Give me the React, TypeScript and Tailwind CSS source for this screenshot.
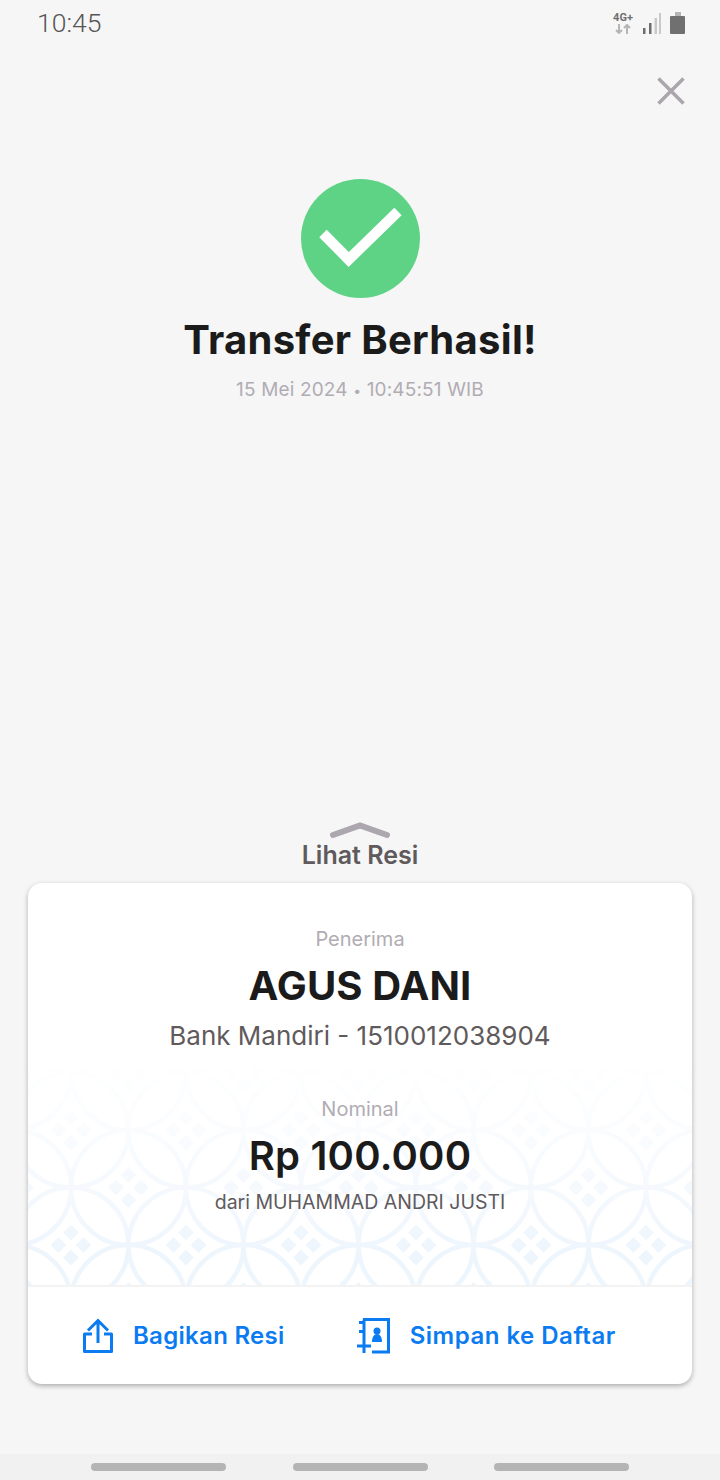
const sans = { fontFamily: 'Inter, "Noto Sans", sans-serif' };

function StatusBar() {
  return (
    <div className="flex h-[46px] items-center justify-between pl-[37px] pr-[35px]">
      <span className="text-[26.5px] font-light leading-none text-[#555555] [font-family:Roboto,sans-serif]">10:45</span>
      <div className="flex items-end gap-[8px]">
        <div className="flex w-[22px] flex-col items-center">
          <span className="text-[11px] font-bold leading-[12px] text-[#707070] [font-family:Roboto,sans-serif]">4G+</span>
          <svg width="16" height="10" viewBox="0 0 16 10" fill="none" strokeWidth="2" stroke="#b5b5b5">
            <path d="M4 0v9M1 6l3 3 3-3" />
            <path d="M12 10V1M9 4l3-3 3 3" />
          </svg>
        </div>
        <svg width="19" height="21" viewBox="0 0 19 21" fill="#c9c9c9">
          <rect x="1" y="15" width="2.500" height="6" fill="#6d6d6d" />
          <rect x="7" y="10" width="2.500" height="11" fill="#6d6d6d" />
          <rect x="12.500" y="5" width="2.500" height="16" />
          <rect x="17" y="0" width="2" height="21" />
        </svg>
        <svg width="15" height="22" viewBox="0 0 15 22" className="ml-[1px]">
          <rect x="5" y="0" width="6" height="4" fill="#b5b5b5" />
          <rect x="0" y="4" width="15" height="18" rx="1" fill="#707070" />
        </svg>
      </div>
    </div>
  );
}

function ShareIcon() {
  return (
    <svg width="30" height="36" viewBox="0 0 30 36" fill="none" stroke="#0a7bf0" strokeWidth="3">
      <path d="M9 16H1.500v17.500h27V16H21" strokeLinejoin="round" />
      <path d="M15 25V3M5 12.500L15 2.500l10 10" />
    </svg>
  );
}

function ContactIcon() {
  return (
    <svg width="33" height="36" viewBox="0 0 33 36" fill="none" stroke="#0a7bf0" strokeWidth="3">
      <path d="M6 1.500H31.500V34H15" />
      <path d="M2 4.500H7V1.500M2 13.500H7V4.500M7 13.500V21" />
      <path d="M0 28H14M7 21V35" />
      <circle cx="20" cy="13" r="3.500" fill="#0a7bf0" stroke="none" />
      <path d="M15 24c0-5 2-8 5-8s5 3 5 8z" fill="#0a7bf0" stroke="none" />
    </svg>
  );
}

const tileCenters = [
  [0, 0],
  [115, 0],
  [0, 115],
  [115, 115],
  [57.5, 57.5],
];

function Kawung() {
  return (
    <svg className="absolute inset-0 h-full w-full" xmlns="http://www.w3.org/2000/svg">
      <defs>
        <pattern id="kawung" x="43" y="75" width="115" height="115" patternUnits="userSpaceOnUse">
          {tileCenters.map(([cx, cy]) => (
            <g key={`${cx}-${cy}`} transform={`translate(${cx} ${cy})`}>
              <circle r="57.5" fill="none" stroke="#edf5fd" strokeWidth="4.500" />
              <g fill="#edf5fd" stroke="#edf5fd" strokeWidth="2" strokeLinejoin="round">
                <path d="M0-19l6.500 6.500L0-6l-6.500-6.500z" />
                <path d="M0 6l6.500 6.500L0 19l-6.500-6.500z" />
                <path d="M-12.500-6.500L-6 0l-6.500 6.500L-19 0z" />
                <path d="M12.500-6.500L19 0l-6.500 6.500L6 0z" />
              </g>
            </g>
          ))}
        </pattern>
      </defs>
      <rect width="100%" height="100%" fill="url(#kawung)" />
    </svg>
  );
}

export default function App() {
  return (
    <div className="flex h-[1480px] w-[720px] flex-col overflow-hidden bg-[#f6f6f6]" style={sans}>
      <StatusBar />

      <div className="flex justify-end pr-[34px] pt-[30px]">
        <svg width="30" height="30" viewBox="0 0 30 30" stroke="#aba6ad" strokeWidth="3.500" fill="none">
          <path d="M2.500 2.500L27.500 27.500M27.500 2.500L2.500 27.500" />
        </svg>
      </div>

      <div className="mt-[73px] flex flex-col items-center">
        <div className="flex h-[119px] w-[119px] items-center justify-center rounded-full bg-[#5fd385]">
          <svg width="84" height="62" viewBox="0 0 84 62" fill="none" stroke="#ffffff" strokeWidth="10.500">
            <path d="M5 25.500L30.700 51.500L80 3.500" />
          </svg>
        </div>
        <h1 className="mt-[17px] text-[40px] font-bold leading-[50px] tracking-[0.3px] text-[#1b1b1b]">Transfer Berhasil!</h1>
        <p className="mt-[12px] h-[26px] text-[19px] leading-[26px] tracking-[0.15px] text-[#b1acb3]">15 Mei 2024 <span className="text-[14px] leading-none">•</span> 10:45:51 WIB</p>
      </div>

      <div className="mt-[419px] flex flex-col items-center">
        <svg width="62" height="18" viewBox="0 0 62 18" fill="none" stroke="#aca6af" strokeWidth="6" strokeLinecap="round">
          <path d="M4 13L31 3.500L58 13" />
        </svg>
        <span className="text-[25px] font-semibold leading-[30px] text-[#5f5a5c]">Lihat Resi</span>
      </div>

      <div className="mx-[28px] mt-[13px] h-[501px] overflow-hidden rounded-[14px] bg-white shadow-[0_2px_5px_rgba(0,0,0,0.3)]">
        <div className="relative h-[402px]">
          <div className="absolute inset-x-0 bottom-0 h-[230px] overflow-hidden">
            <Kawung />
            <div className="absolute inset-0 bg-gradient-to-b from-white via-white/60 via-45% to-transparent to-90%" />
          </div>
          <div className="relative flex flex-col items-center pt-[43px]">
            <p className="text-[20px] leading-[26px] text-[#b1acb3]">Penerima</p>
            <p className="mt-[10px] text-[40px] font-bold leading-[48px] tracking-[0.1px] text-[#1b1b1b]">AGUS DANI</p>
            <p className="mt-[9px] text-[26px] leading-[34px] text-[#5f5a5c]">Bank Mandiri - 1510012038904</p>
            <p className="mt-[43px] text-[20px] leading-[26px] text-[#b1acb3]">Nominal</p>
            <p className="mt-[10px] text-[40px] font-semibold leading-[48px] tracking-[0.2px] text-[#1b1b1b]">Rp 100.000</p>
            <p className="mt-[9px] text-[19.5px] leading-[26px] text-[#5f5a5c]">dari MUHAMMAD ANDRI JUSTI</p>
          </div>
        </div>
        <div className="flex h-[99px] items-center border-t-2 border-[#f3f3f3] pl-[55px]">
          <ShareIcon />
          <span className="ml-[20px] text-[24px] font-semibold tracking-[0.3px] text-[#0a7bf0]">Bagikan Resi</span>
          <div className="ml-[72px]"><ContactIcon /></div>
          <span className="ml-[20px] text-[24px] font-semibold tracking-[0.5px] text-[#0a7bf0]">Simpan ke Daftar</span>
        </div>
      </div>

      <div className="mt-auto flex h-[26px] items-center justify-between bg-[#f1f1f1] px-[91px]">
        <div className="h-[8px] w-[135px] rounded-full bg-[#b4b4b4]" />
        <div className="h-[8px] w-[135px] rounded-full bg-[#b4b4b4]" />
        <div className="h-[8px] w-[135px] rounded-full bg-[#b4b4b4]" />
      </div>
    </div>
  );
}
